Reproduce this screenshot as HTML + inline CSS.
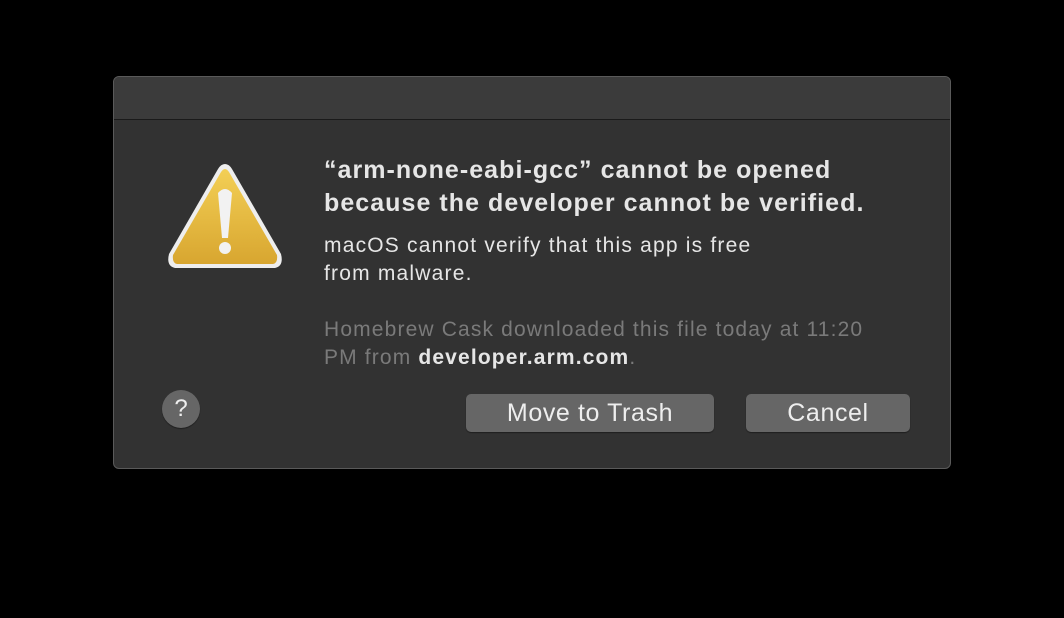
<!DOCTYPE html>
<html><head><style>
body{margin:0;width:1064px;height:618px;background:#000;position:relative;overflow:hidden;font-family:"Liberation Sans",sans-serif;}
.dlg{position:absolute;left:113px;top:76px;width:836px;height:391px;background:#323232;border:1px solid #5a5a5a;border-radius:6px;overflow:hidden}
.tb{position:absolute;left:0;top:0;right:0;height:42px;background:#3b3b3b;border-bottom:1px solid #1a1a1a}
.t{position:absolute;left:210px;color:#e6e6e6;white-space:nowrap}
.b{position:absolute;top:317px;height:38px;background:#666;border-radius:5px;color:#eee;font-size:25px;letter-spacing:0.6px;text-align:center;line-height:38px;box-shadow:0 1px 1px rgba(0,0,0,.4)}
</style></head><body>
<div class="dlg">
<div class="tb"></div>
<svg style="position:absolute;left:51px;top:85px" width="120" height="108" viewBox="0 0 120 108">
<defs><linearGradient id="g" x1="0" y1="0" x2="0" y2="1"><stop offset="0" stop-color="#f3cf55"/><stop offset="1" stop-color="#d8a630"/></linearGradient></defs>
<path d="M60 2 Q64 2 67 7 L116 92 Q119 104 110 106 L10 106 Q1 104 4 92 L53 7 Q56 2 60 2Z" fill="#eee"/>
<path d="M60 7 Q62 7 64 10 L112 93 Q113 101 108 102 L12 102 Q7 101 8 93 L56 10 Q58 7 60 7Z" fill="url(#g)"/>
<path d="M53 31 Q60 23 67 31 L63 76 L57 76Z" fill="#f2f2f2"/>
<circle cx="60" cy="86" r="6" fill="#f2f2f2"/>
</svg>
<div class="t" style="top:77px;font-size:25px;letter-spacing:1.05px;font-weight:bold;line-height:33px">“arm-none-eabi-gcc” cannot be opened<br>because the developer cannot be verified.</div>
<div class="t" style="top:155px;font-size:21px;letter-spacing:1.2px;line-height:28px">macOS cannot verify that this app is free<br>from malware.</div>
<div class="t" style="top:239px;font-size:21px;letter-spacing:1.15px;line-height:28px;color:#7a7a7a">Homebrew Cask downloaded this file today at 11:20<br>PM from <b style="color:#e6e6e6">developer.arm.com</b>.</div>
<div style="position:absolute;left:48px;top:313px;width:38px;height:38px;border-radius:50%;background:#666;color:#eee;font-size:24px;text-align:center;line-height:38px;box-shadow:0 1px 1px rgba(0,0,0,.4)">?</div>
<div class="b" style="left:352px;width:248px">Move to Trash</div>
<div class="b" style="left:632px;width:164px">Cancel</div>
</div>
</body></html>
